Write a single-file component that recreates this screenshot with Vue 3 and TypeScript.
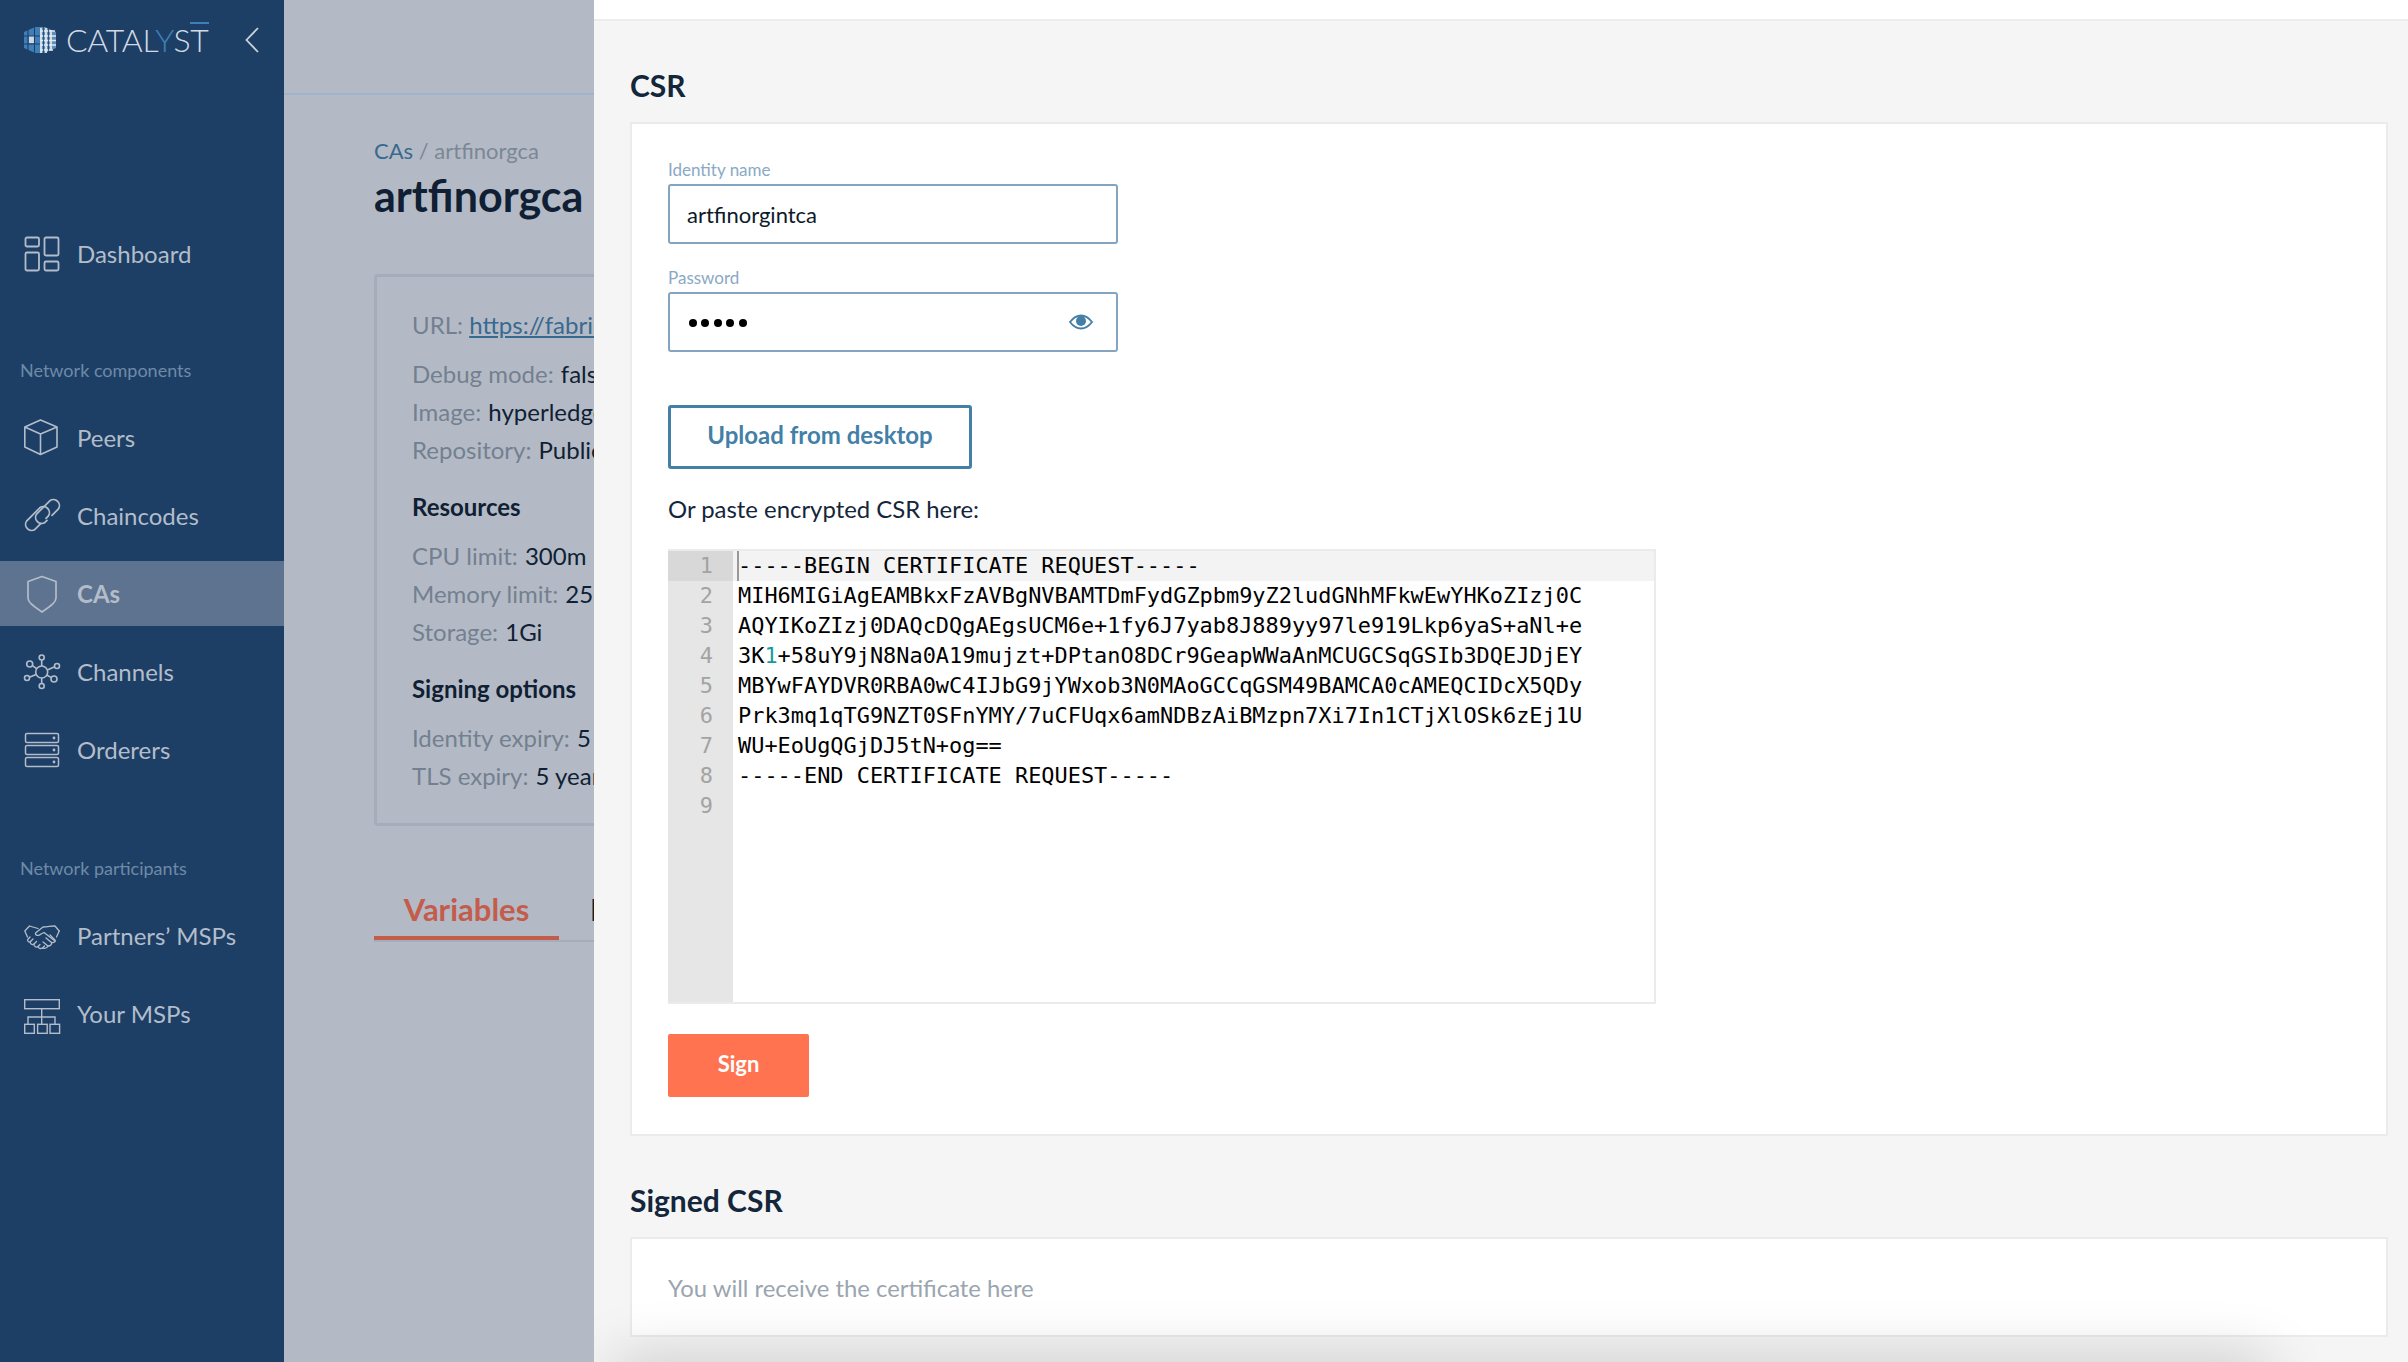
<script setup lang="ts">
const info1 = [
  { k: 'Debug mode:', v: 'false' },
  { k: 'Image:', v: 'hyperledger/fabric-ca' },
  { k: 'Repository:', v: 'Public' },
]
const info2 = [
  { k: 'CPU limit:', v: '300m' },
  { k: 'Memory limit:', v: '256Mi' },
  { k: 'Storage:', v: '1Gi' },
]
const info3 = [
  { k: 'Identity expiry:', v: '5 years' },
  { k: 'TLS expiry:', v: '5 years' },
]
const lines: string[] = [
  '-----BEGIN CERTIFICATE REQUEST-----',
  'MIH6MIGiAgEAMBkxFzAVBgNVBAMTDmFydGZpbm9yZ2ludGNhMFkwEwYHKoZIzj0C',
  'AQYIKoZIzj0DAQcDQgAEgsUCM6e+1fy6J7yab8J889yy97le919Lkp6yaS+aNl+e',
  '3K1+58uY9jN8Na0A19mujzt+DPtanO8DCr9GeapWWaAnMCUGCSqGSIb3DQEJDjEY',
  'MBYwFAYDVR0RBA0wC4IJbG9jYWxob3N0MAoGCCqGSM49BAMCA0cAMEQCIDcX5QDy',
  'Prk3mq1qTG9NZT0SFnYMY/7uCFUqx6amNDBzAiBMzpn7Xi7In1CTjXlOSk6zEj1U',
  'WU+EoUgQGjDJ5tN+og==',
  '-----END CERTIFICATE REQUEST-----',
  '',
]
</script>

<template>
  <div class="app">
    <aside class="side">
      <div class="logo">
        <svg class="logomark" viewBox="0 0 32 28">
          <path d="M0 6 11 1h5v26h-5L0 22Z" fill="#3f7fb8" />
          <path d="M16 1h5l11 5v16l-11 5h-5Z" fill="#5f8fb8" />
          <rect x="5" y="10" width="5" height="7" fill="#cfd8e2" />
          <g fill="none" stroke="#1d3f66" stroke-width="1.1">
            <path d="M4 3v23M10.500 1v27" />
            <path d="M0 10h16M0 18h16" />
          </g>
          <g fill="none" stroke="#e4e9ef" stroke-width="1.700">
            <path d="M17 2v25M22 2v25M27 4v20" />
            <path d="M16 5h15M16 10h16M16 14.500h16M16 19h16M16 24h13" />
          </g>
          <g fill="none" stroke="#1d3f66" stroke-width=".8">
            <path d="M19.500 1v27M24.500 2v25" />
          </g>
        </svg>
        <span class="logotext">CATAL<span class="y">Y</span>S<span class="t">T</span></span>
        <svg class="chev" viewBox="0 0 14 26"><path d="M13 1 1.500 13 13 25" fill="none" stroke="#c9d1db" stroke-width="1.800" /></svg>
      </div>

      <nav class="nav">
        <a class="item first">
          <svg class="ic" viewBox="0 0 36 38"><g fill="none" stroke="currentColor" stroke-width="1.800"><rect x="1.500" y="3.500" width="13.500" height="9" rx="1.500" /><rect x="20.500" y="3.500" width="14" height="18" rx="1.500" /><rect x="1.500" y="18.500" width="13.500" height="18" rx="1.500" /><rect x="20.500" y="27.500" width="14" height="9" rx="1.500" /></g></svg>
          Dashboard
        </a>
        <div class="group">Network components</div>
        <a class="item">
          <svg class="ic" viewBox="0 0 36 38"><path d="M16.500 1 33 8v20l-16.500 7.500L.8 28V8Zm0 34.500V15M.8 8l15.700 7L33 8" fill="none" stroke="currentColor" stroke-width="1.600" stroke-linejoin="round" /></svg>
          Peers
        </a>
        <a class="item">
          <svg class="ic" viewBox="0 0 36 38"><g fill="none" stroke="currentColor" stroke-width="1.700" stroke-linecap="round"><path d="M17 26.400 11.200 32.200A6 6 0 0 1 2.800 23.800L15.800 10.800A6 6 0 0 1 24.200 19.200L22 21.400" /><path d="M28 18.400 34.200 12.200A6 6 0 0 0 25.800 3.800L12.800 16.800A6 6 0 0 0 21.200 25.200L23 23.400" /></g></svg>
          Chaincodes
        </a>
        <a class="item active">
          <svg class="ic" viewBox="0 0 36 38"><path d="M18 1.500 32 6.500V23C32 27 28 30 18 37 8 30 4 27 4 23V6.500Z" fill="none" stroke="currentColor" stroke-width="1.700" stroke-linejoin="round" /></svg>
          CAs
        </a>
        <a class="item">
          <svg class="ic" viewBox="0 0 36 38"><g fill="none" stroke="currentColor" stroke-width="1.600"><circle cx="17.700" cy="19" r="6" /><circle cx="17.700" cy="4.500" r="2.500" /><circle cx="17.700" cy="33" r="2.500" /><circle cx="5.700" cy="11" r="3" /><circle cx="33" cy="13" r="2.500" /><circle cx="3" cy="25" r="2.500" /><circle cx="30" cy="26" r="3" /><path d="M17.700 7v6M17.700 25v5.500M8.300 12.700 12.700 15.700M30.600 13.800 23.400 17M5.400 24.300 12 21.500M27.400 24.600 22.700 22" /></g></svg>
          Channels
        </a>
        <a class="item">
          <svg class="ic" viewBox="0 0 36 38"><g fill="none" stroke="currentColor" stroke-width="1.500"><rect x="1.500" y="2.500" width="33" height="9" rx="1.500" /><rect x="1.500" y="14.500" width="33" height="9" rx="1.500" /><rect x="1.500" y="26.500" width="33" height="9" rx="1.500" /></g><circle cx="30" cy="7" r="1.400" fill="currentColor" /><circle cx="30" cy="19" r="1.400" fill="currentColor" /><circle cx="30" cy="31" r="1.400" fill="currentColor" /></svg>
          Orderers
        </a>
        <div class="group second">Network participants</div>
        <a class="item">
          <svg class="ic" viewBox="0 -8 36 38"><g fill="none" stroke="currentColor" stroke-width="1.300" stroke-linejoin="round" stroke-linecap="round"><path d="M3.500 12 .8 6 5.500 1 14 3.500" /><path d="M35.200 6 31 1C27 .8 24 2 19 2L11.500 8C11 11 15 11 17 9L20 7.500 31 16" /><path d="M32.500 12 35.200 6" /><path d="M6 12 3.800 14.500C3 16 5 18 6.500 16.500L9 14" /><path d="M6.500 16.500C5.500 18.500 8 20.500 10 19L12.500 16.500" /><path d="M10 19C9.500 21 12 23 14 21.500L16 19.500" /><path d="M14 21.500C14 23.500 17 24 18.500 23L20.500 21" /><path d="M18.500 23C21 24 23 23 24 21L19 17" /><path d="M24 21C26.500 21 28 19.500 27.500 17.500L22 13" /><path d="M27.500 17.500C30 18 32 16.500 31 15L26 10" /></g></svg>
          Partners’ MSPs
        </a>
        <a class="item">
          <svg class="ic" viewBox="0 0 36 38"><g fill="none" stroke="currentColor" stroke-width="1.400"><rect x=".7" y="4.700" width="34.600" height="9" /><rect x=".7" y="29.300" width="9.600" height="9" /><rect x="13.600" y="29.300" width="9.600" height="9" /><rect x="26" y="29.300" width="9.600" height="9" /><path d="M17.700 13.700v15.600M4 29.300V22h27v7.300" /></g></svg>
          Your MSPs
        </a>
      </nav>
    </aside>

    <main class="main">
      <div class="topbar"></div>
      <div class="content">
        <div class="crumb"><span class="lnk">CAs</span> / artfinorgca</div>
        <h1>artfinorgca</h1>
        <section class="box">
          <p class="row url">URL: <span class="href">https://fabric-ca.example</span></p>
          <p v-for="r in info1" :key="r.k" class="row">{{ r.k }} <b>{{ r.v }}</b></p>
          <h4>Resources</h4>
          <p v-for="r in info2" :key="r.k" class="row">{{ r.k }} <b>{{ r.v }}</b></p>
          <h4>Signing options</h4>
          <p v-for="r in info3" :key="r.k" class="row">{{ r.k }} <b>{{ r.v }}</b></p>
        </section>
        <div class="tabs">
          <span class="tab on">Variables</span>
          <span class="tab">Logs</span>
        </div>
      </div>
    </main>

    <div class="panel">
      <div class="strip"></div>
      <div class="body">
        <h2>CSR</h2>
        <section class="card">
          <label class="lab">Identity name</label>
          <div class="field">artfinorgintca</div>
          <label class="lab pw">Password</label>
          <div class="field">
            <span class="dots"><i></i><i></i><i></i><i></i><i></i></span>
            <svg class="eye" viewBox="0 0 24 16"><path d="M1 8c3-4 7-6.500 11-6.500S20 4 23 8c-3 4-7 6.500-11 6.500S4 12 1 8Z" fill="none" stroke="#437fa6" stroke-width="1.800" /><circle cx="12" cy="7" r="5" fill="#437fa6" /></svg>
          </div>
          <button class="upload">Upload from desktop</button>
          <div class="or">Or paste encrypted CSR here:</div>
          <div class="editor">
            <div class="gutter">
              <div v-for="(l, i) in lines" :key="i" class="num" :class="{ cur: i === 0 }">{{ i + 1 }}</div>
            </div>
            <div class="code">
              <div v-for="(l, i) in lines" :key="i" class="line" :class="{ cur: i === 0 }"><template v-if="i === 3">3K<span class="teal">1</span>{{ l.slice(3) }}</template><template v-else>{{ l }}</template></div>
              <span class="caret"></span>
            </div>
          </div>
          <button class="sign">Sign</button>
        </section>
        <h2 class="h2b">Signed CSR</h2>
        <section class="card small">You will receive the certificate here</section>
      </div>
      <div class="footer"></div>
    </div>
  </div>
</template>

<style>
html, body { margin: 0; padding: 0; overflow: hidden; }
</style>

<style scoped>
.app { display: flex; width: 2408px; height: 1362px; position: relative; overflow: hidden; background: #b3bac6; font-family: Lato, "Liberation Sans", sans-serif; }
.side { width: 284px; flex: none; background: #1d3f66; color: #b3bdca; }
.logo { display: flex; align-items: center; height: 80px; padding-left: 24px; box-sizing: border-box; }
.logomark { width: 32px; height: 28px; flex: none; }
.logotext { margin-left: 10px; font-size: 32px; font-weight: 300; color: #d3dae3; width: 143px; flex: none; line-height: 1; letter-spacing: -.3px; white-space: nowrap; }
.logotext .y { color: #3f7fb8; }
.logotext .t { position: relative; }
.logotext .t::before { content: ""; position: absolute; left: 0; right: 0; top: 2px; height: 2px; background: #3f7fb8; }
.chev { width: 14px; height: 26px; margin-left: 36px; flex: none; }
.nav { padding-top: 140px; }
.item { display: flex; align-items: center; height: 65px; margin-bottom: 13px; padding-left: 24px; font-size: 24px; gap: 17px; }
.item.first { height: 66px; margin-bottom: 72px; }
.item.active { background: #5d7390; font-weight: 700; }
.ic { width: 36px; height: 38px; flex: none; overflow: visible; }
.group { font-size: 18px; color: #6f8aa6; padding-left: 20px; height: 25px; line-height: 25px; margin-bottom: 22px; }
.group.second { margin-top: 74px; }
.main { flex: 1; min-width: 0; }
.topbar { height: 93px; border-bottom: 2px solid #9fb4cb; }
.content { padding: 42px 0 0 90px; }
.crumb { font-size: 22px; line-height: 28px; color: #7c8795; }
.lnk { color: #38698f; }
h1 { margin: 1px 0 0; font-size: 43px; line-height: 60px; font-weight: 700; color: #101f33; }
.box { margin-top: 48px; width: 900px; height: 552px; box-sizing: border-box; border: 3px solid #a5adbb; border-radius: 4px; padding: 29px 0 0 35px; }
.row { margin: 0; font-size: 24px; line-height: 38px; color: #74808f; white-space: nowrap; }
.row b { font-weight: 400; color: #101f33; margin-left: 1px; }
.row.url { margin-bottom: 11px; }
.href { color: #38698f; text-decoration: underline; }
h4 { margin: 22px 0 15px; font-size: 24px; line-height: 31px; font-weight: 700; color: #101f33; }
.tabs { margin-top: 64px; width: 900px; height: 50px; display: flex; border-bottom: 2px solid #a5adbb; box-sizing: content-box; }
.tab { font-size: 31px; line-height: 38px; font-weight: 700; color: #101f33; }
.tab.on { width: 185px; text-align: center; color: #c45c4c; border-bottom: 4px solid #c45c4c; height: 46px; margin-right: 31px; }

.panel { position: absolute; left: 594px; top: 0; right: 0; bottom: 0; background: #f5f5f5; overflow: hidden; }
.strip { height: 19px; background: #fff; border-bottom: 2px solid #ececec; }
.body { padding: 46px 20px 0 36px; }
h2 { margin: 0; font-size: 30px; line-height: 36px; font-weight: 700; color: #14263a; }
.card { margin-top: 19px; border: 2px solid #ebebeb; background: #fff; padding: 33px 36px 0; box-sizing: border-box; height: 1014px; }
.lab { display: block; font-size: 17px; line-height: 25px; margin-bottom: 2px; color: #8aa9c4; }
.lab.pw { margin-top: 21px; }
.field { width: 450px; height: 60px; box-sizing: border-box; border: 2px solid #84a5c2; border-radius: 3px; display: flex; align-items: center; justify-content: space-between; padding: 0 23px 0 17px; font-size: 22px; color: #0c1a2a; }
.dots { display: flex; gap: 4.600px; margin: 2px 0 0 1.500px; }
.dots i { width: 8px; height: 8px; border-radius: 50%; background: #000; }
.eye { width: 24px; height: 16px; }
.upload { display: block; margin-top: 53px; width: 304px; height: 64px; box-sizing: border-box; background: #fff; border: 3px solid #437fa6; border-radius: 3px; font: 700 24px Lato, sans-serif; color: #437fa6; padding: 0 0 5px; }
.or { margin-top: 24px; font-size: 23.900px; line-height: 32px; color: #14263a; }
.editor { display: flex; margin-top: 24px; width: 988px; height: 455px; box-sizing: border-box; border: 2px solid #ebebeb; border-left: 0; background: #fff; font: 21.920px/30px "DejaVu Sans Mono", monospace; }
.gutter { width: 65px; flex: none; background: #e6e6e6; color: #a3a3a3; }
.num { height: 30px; text-align: right; padding-right: 20px; }
.num.cur { background: #d8d8d8; }
.code { flex: 1; position: relative; padding-left: 5px; color: #000; }
.line { height: 30px; white-space: pre; }
.line.cur { background: #f3f3f3; margin-left: -5px; padding-left: 5px; }
.teal { color: #1a9a9a; }
.caret { position: absolute; left: 4px; top: 0; width: 2px; height: 30px; background: #999; }
.sign { display: block; margin-top: 30px; width: 141px; height: 63px; border: 0; border-radius: 2px; background: #ff7350; color: #fff; font: 700 22px Lato, sans-serif; padding: 0 0 5px; }
.h2b { margin-top: 46px; }
.card.small { margin-top: 19px; height: 100px; padding: 0 36px; display: flex; align-items: center; font-size: 23.850px; color: #9aa5af; }
.footer { position: absolute; left: 20px; right: 140px; top: 1362px; height: 40px; box-shadow: 0 0 60px rgba(0, 0, 0, .22); }
</style>
